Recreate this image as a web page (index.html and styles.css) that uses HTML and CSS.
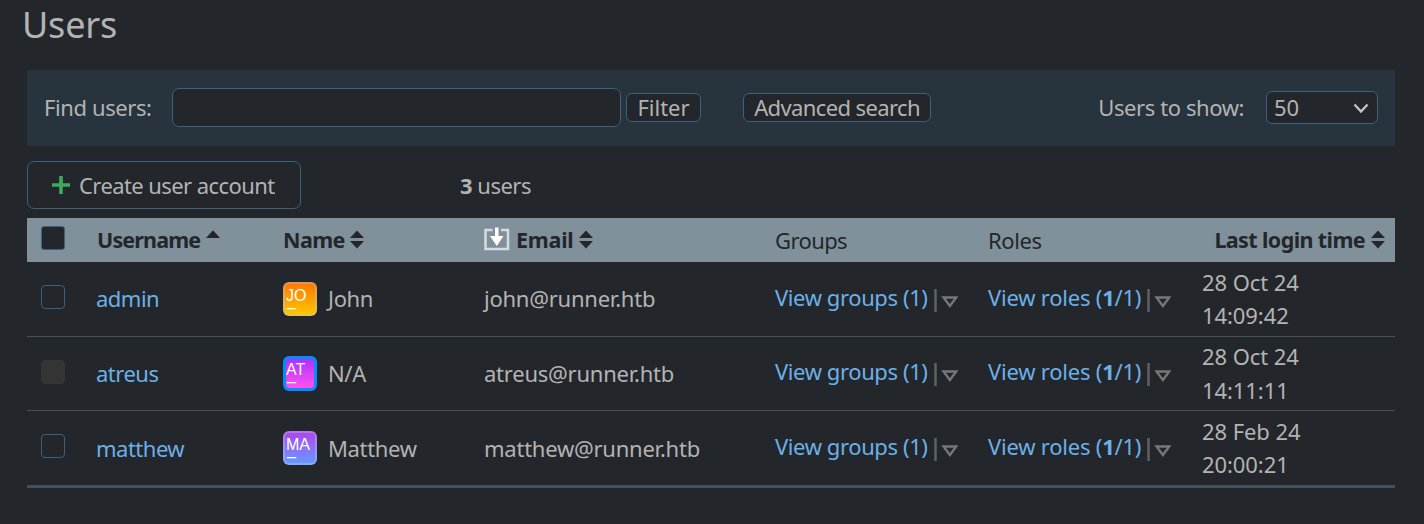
FILE: index.html
```html
<!DOCTYPE html>
<html lang="en">
<head>
<meta charset="utf-8">
<title>Users</title>
<link rel="stylesheet" href="styles.css">
</head>
<body>
<svg class="defs" width="0" height="0">
  <symbol id="sort" viewBox="0 0 14 19"><path d="M0 8 7 .5 14 8ZM0 11 7 18.500 14 11Z"/></symbol>
  <symbol id="asc" viewBox="0 0 14 8"><path d="M0 8 7 .3 14 8Z"/></symbol>
  <symbol id="more" viewBox="0 0 24 24"><path class="bar" d="M1.500 0V23"/><path class="tri" d="M9.500 8.500H22.200L15.900 17Z"/></symbol>
</svg>
<h1 class="title">Users</h1>
<main class="page">
  <form class="filter">
    <label class="find" for="q">Find users:</label>
    <input class="query" id="q" type="text">
    <button class="btn btn-filter" type="button">Filter</button>
    <button class="btn btn-adv" type="button">Advanced search</button>
    <span class="show">Users to show:</span>
    <div class="select"><span>50</span><svg width="16" height="11" viewBox="0 0 16 11"><path d="M1.500 1.500 8 8.500 14.500 1.500"/></svg></div>
  </form>
  <div class="actions">
    <button class="create" type="button"><svg width="18" height="18" viewBox="0 0 18 18"><path d="M9 0V18M0 9H18"/></svg><span>Create user account</span></button>
    <div class="count"><b>3</b> users</div>
  </div>
  <div class="table">
    <div class="row head">
      <div class="check"><i class="box filled"></i></div>
      <div class="hcell"><b class="t-user">Username</b><svg class="asc" width="14" height="8"><use href="#asc"/></svg></div>
      <div class="hcell"><b>Name</b><svg class="sort" width="14" height="19"><use href="#sort"/></svg></div>
      <div class="hcell"><svg class="verify" width="26" height="24" viewBox="0 0 26 24"><path class="tray" d="M8.500 3H1.500V22H24V3H17"/><path class="arrow" d="M11 .5H14.500V9H19.500L12.800 19 6 9H11Z"/></svg><b class="t-email">Email</b><svg class="sort" width="14" height="19"><use href="#sort"/></svg></div>
      <div class="hcell plain">Groups</div>
      <div class="hcell plain t-roles">Roles</div>
      <div class="hcell last"><b>Last login time</b><svg class="sort" width="14" height="19"><use href="#sort"/></svg></div>
    </div>
    <div class="row">
      <div class="check"><i class="box"></i></div>
      <a class="user">admin</a>
      <div class="person"><span class="avatar jo">JO<span class="mark">_</span></span><span class="pname">John</span></div>
      <div class="email">john@runner.htb</div>
      <div class="view"><a class="t-vg">View groups (1)</a><svg width="24" height="24"><use href="#more"/></svg></div>
      <div class="view"><a class="t-vr">View roles (<b>1</b>/1)</a><svg width="24" height="24"><use href="#more"/></svg></div>
      <div class="date">28 Oct 24<br>14:09:42</div>
    </div>
    <div class="row mid">
      <div class="check"><i class="box disabled"></i></div>
      <a class="user">atreus</a>
      <div class="person"><span class="avatar at">AT<span class="mark">_</span></span><span class="pname">N/A</span></div>
      <div class="email">atreus@runner.htb</div>
      <div class="view"><a class="t-vg">View groups (1)</a><svg width="24" height="24"><use href="#more"/></svg></div>
      <div class="view"><a class="t-vr">View roles (<b>1</b>/1)</a><svg width="24" height="24"><use href="#more"/></svg></div>
      <div class="date">28 Oct 24<br>14:11:11</div>
    </div>
    <div class="row">
      <div class="check"><i class="box"></i></div>
      <a class="user">matthew</a>
      <div class="person"><span class="avatar ma">MA<span class="mark">_</span></span><span class="pname">Matthew</span></div>
      <div class="email">matthew@runner.htb</div>
      <div class="view"><a class="t-vg">View groups (1)</a><svg width="24" height="24"><use href="#more"/></svg></div>
      <div class="view"><a class="t-vr">View roles (<b>1</b>/1)</a><svg width="24" height="24"><use href="#more"/></svg></div>
      <div class="date">28 Feb 24<br>20:00:21</div>
    </div>
  </div>
</main>
</body>
</html>
```

FILE: styles.css
```css
* { box-sizing: border-box; }
body { margin: 0; background: #23272b; color: #b3b3b3; font: 22px/30px "Noto Sans", sans-serif; letter-spacing: -.2px; white-space: nowrap; overflow: hidden; height: 524px; }
.defs { display: block; }
svg { flex: none; }
.title { margin: 0; padding: 1px 0 0 22px; height: 70px; font-size: 36px; line-height: 48px; font-weight: 400; }
.page { margin: 0 29px 0 27px; }
.filter { display: flex; align-items: center; height: 76px; padding: 0 17px 1px; background: #27343d; }
.find { width: 128px; letter-spacing: -.4px; padding-bottom: 1px; }
.query { width: 449px; height: 39px; margin: 0 5px 0 0; border: 1px solid #3c6080; border-radius: 7px; background: #23272b; }
.btn { height: 29px; padding: 0; border: 1px solid #3c6080; border-radius: 6px; background: #23272b; color: inherit; font: inherit; line-height: 27px; text-align: center; }
.btn-filter { width: 75px; margin-right: 42px; }
.btn-adv { width: 188px; letter-spacing: -.62px; }
.show { margin-left: auto; margin-right: 22px; padding-bottom: 1px; letter-spacing: -.42px; }
.select { display: flex; align-items: center; justify-content: space-between; width: 112px; height: 33px; padding: 0 8px 0 7px; border: 1px solid #3c6080; border-radius: 6px; background: #23272b; }
.select span { padding-bottom: 1px; }
.select svg { fill: none; stroke: #c4c4c4; stroke-width: 2.3; margin-top: 1px; }
.actions { display: flex; padding-top: 15px; height: 72px; }
.create { display: flex; align-items: center; width: 274px; height: 48px; padding: 0 0 0 24px; border: 1px solid #3c6080; border-radius: 7px; background: none; color: inherit; font: inherit; letter-spacing: -.58px; }
.create svg { margin-right: 9px; stroke: #3eaa5c; stroke-width: 3.6; }
.create span { padding-bottom: 1px; }
.count { margin: 9px 0 0 159px; letter-spacing: -.5px; }
.row { display: grid; grid-template-columns: 70px 186px 201px 292px 213px 214px 192px; height: 75px; border-bottom: 1px solid #43515b; }
.mid { height: 74px; }
.row:last-child { height: 77px; border-bottom: 3px solid #464f59; }
.head { height: 44px; background: #80919c; color: #23272b; border: 0; }
.head b { font-size: 21.5px; }
.check { padding: 23px 0 0 14px; }
.row:last-child .check { padding-top: 23px; }
.head .check { padding-top: 8px; }
.box { display: block; width: 24px; height: 24px; border: 1px solid #3c6080; border-radius: 4px; }
.filled { background: #23272b; border-radius: 3px; }
.disabled { background: #353535; border-color: #353535; }
.hcell { display: flex; align-items: flex-start; padding-top: 7px; letter-spacing: -.6px; }
.plain { padding-top: 7px; margin-left: -1px; }
.t-roles { letter-spacing: -.4px; }
.sort, .asc { margin: 5px 0 0 6px; fill: #23272b; }
.hcell:nth-child(3) .sort { margin-left: 5px; }
.hcell:nth-child(4) .sort { margin-left: 6px; }
.last { justify-content: flex-end; padding-right: 10px; }
.t-user { letter-spacing: -.85px; }
.t-email { letter-spacing: -.25px; }
.verify { margin: 2px 6px 0 0; fill: none; stroke: #d5dce1; stroke-width: 2.5; }
.verify .arrow { fill: #fff; stroke: none; }
a { color: #6cb0e8; }
.user, .email, .pname { padding-top: 21px; }
.email { letter-spacing: -.24px; }
.user { letter-spacing: -.5px; margin-left: -1px; }
.pname { letter-spacing: -.35px; }
.row:last-child .user, .row:last-child .email, .row:last-child .pname { padding-top: 22px; }
.person { display: flex; align-items: flex-start; }
.avatar { width: 34px; height: 34px; margin: 20px 11px 0 0; padding: 2px 0 0 1px; border: 2px solid transparent; border-radius: 6px; color: #fff; font: 16px/20px "Liberation Sans", sans-serif; letter-spacing: -.1px; }
.mark { display: block; line-height: 0; padding: 0 0 0 1px; margin-top: -5px; }
.jo { background: linear-gradient(#ff7b00, #ffc400) padding-box, linear-gradient(#e09558, #e1c65a) border-box; }
.at { height: 35px; margin-top: 19px; background: linear-gradient(#ad31ff, #ff52ee) padding-box, #008eff border-box; border-width: 3px; padding: 1px 0 0; }
.ma { background: linear-gradient(#ad48ef, #6799ff) padding-box, linear-gradient(#b576e6, #83adf5) border-box; }
.view { display: flex; padding-top: 20px; margin-left: -1px; }
.mid .view { padding-top: 19px; }
.t-vg { width: 154px; letter-spacing: -.4px; }
.t-vr { width: 154px; letter-spacing: -.22px; }
.view svg { margin: 7px 0 0 5px; fill: none; }
.bar { stroke: #606162; stroke-width: 2.5; }
.tri { stroke: #777; stroke-width: 2.3; }
.date { padding-top: 4px; margin-left: -1px; line-height: 33px; letter-spacing: -.08px; }
.mid .date { padding-top: 2px; line-height: 34px; }
```
